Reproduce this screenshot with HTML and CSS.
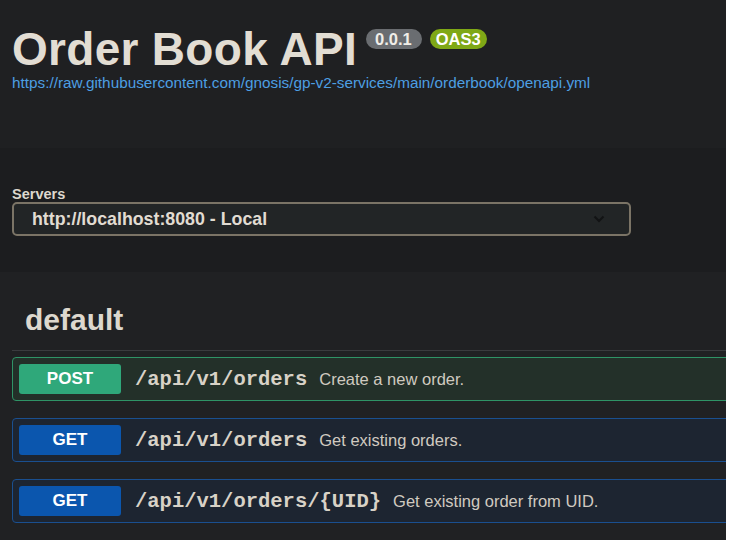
FILE: index.html
```html
<!DOCTYPE html>
<html lang="en">
<head>
<meta charset="utf-8">
<title>Order Book API</title>
<link rel="stylesheet" href="styles.css">
</head>
<body>
<div class="page">
  <section class="info">
    <div class="title-row">
      <h2 class="title">Order Book API</h2>
      <span class="pill pill-version">0.0.1</span>
      <span class="pill pill-oas">OAS3</span>
    </div>
    <a class="spec-link" href="#">https://raw.githubusercontent.com/gnosis/gp-v2-services/main/orderbook/openapi.yml</a>
  </section>

  <section class="servers">
    <div class="servers-label">Servers</div>
    <div class="select">
      <span class="select-text">http://localhost:8080 - Local</span>
      <svg class="chevron" width="12" height="8" viewBox="0 0 12 8"><path d="M1.5 1.5 L6 6 L10.5 1.5" fill="none" stroke="#121314" stroke-width="2"/></svg>
    </div>
  </section>

  <section class="ops">
    <h3 class="tag">default</h3>
    <div class="opblock op-post">
      <span class="method">POST</span>
      <span class="path">/api/v1/orders</span>
      <span class="desc">Create a new order.</span>
    </div>
    <div class="opblock op-get">
      <span class="method">GET</span>
      <span class="path">/api/v1/orders</span>
      <span class="desc">Get existing orders.</span>
    </div>
    <div class="opblock op-get">
      <span class="method">GET</span>
      <span class="path">/api/v1/orders/{UID}</span>
      <span class="desc">Get existing order from UID.</span>
    </div>
  </section>
</div>
</body>
</html>
```

FILE: styles.css
```css
html, body {
  margin: 0;
  padding: 0;
  background: #ffffff;
}

body {
  font-family: "Liberation Sans", Arial, sans-serif;
}

.page {
  width: 726px;
  height: 540px;
  overflow: hidden;
  background: #202123;
}

.info {
  height: 148px;
  box-sizing: border-box;
  padding: 27px 0 0 12px;
  background: #1f2022;
}

.title-row {
  display: flex;
  align-items: flex-start;
}

.title {
  margin: 0;
  font-size: 46px;
  line-height: 45px;
  font-weight: 700;
  color: #e2ddd3;
  letter-spacing: 0.3px;
}

.pill {
  margin-top: 2px;
  height: 20px;
  box-sizing: border-box;
  border-radius: 10px;
  font-size: 16.5px;
  line-height: 20px;
  font-weight: 700;
  color: #ffffff;
}

.pill-version {
  margin-left: 9px;
  padding: 0 10px 0 9px;
  background: #6a6d71;
  color: #f0ede8;
}

.pill-oas {
  margin-left: 8px;
  padding: 0 6px;
  background: #7fa816;
}

.spec-link {
  display: block;
  margin-top: 1px;
  font-size: 15.3px;
  line-height: 19px;
  color: #4d9fe3;
  text-decoration: none;
}

.servers {
  height: 124px;
  box-sizing: border-box;
  padding: 38px 0 0 12px;
  background: #1c1d1f;
}

.servers-label {
  font-size: 14.5px;
  line-height: 16px;
  font-weight: 700;
  color: #ddd8ce;
}

.select {
  width: 619px;
  height: 34px;
  box-sizing: border-box;
  border: 2px solid #7b7466;
  border-radius: 5px;
  background: #222526;
  display: flex;
  align-items: center;
  padding: 0 24px 0 18px;
}

.select-text {
  flex: 1;
  font-size: 17.8px;
  font-weight: 700;
  color: #e1dcd2;
}

.chevron {
  display: block;
}

.ops {
  padding: 0 0 0 12px;
  width: 760px;
}

.tag {
  margin: 0;
  padding: 29px 0 11px 13px;
  font-size: 30px;
  line-height: 38px;
  font-weight: 700;
  color: #ddd8ce;
  border-bottom: 1px solid #3a3b3e;
}

.opblock {
  display: flex;
  align-items: center;
  height: 44px;
  box-sizing: border-box;
  padding: 0 6px;
  border: 1px solid;
  border-radius: 4px;
  margin-bottom: 17px;
}

.ops .op-post {
  margin-top: 6px;
}

.op-post {
  border-color: #2f9366;
  background: #233029;
}

.op-get {
  border-color: #1a4f8f;
  background: #1d2531;
}

.method {
  width: 102px;
  height: 30px;
  border-radius: 3px;
  display: flex;
  align-items: center;
  justify-content: center;
  font-size: 17px;
  font-weight: 700;
  color: #ffffff;
}

.op-post .method {
  background: #2fa87a;
}

.op-get .method {
  background: #0b56ae;
}

.path {
  margin-left: 14px;
  font-family: "Liberation Mono", "Courier New", monospace;
  font-size: 20.5px;
  font-weight: 700;
  color: #d8d2c7;
}

.desc {
  margin-left: 12px;
  font-size: 16.5px;
  color: #d0cac0;
}
```
